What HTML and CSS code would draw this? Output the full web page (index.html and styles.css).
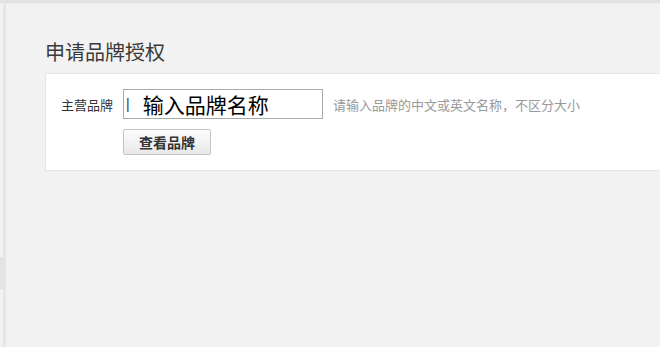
FILE: index.html
```html
<!DOCTYPE html>
<html lang="zh-CN">
<head>
  <meta charset="UTF-8">
  <title>申请品牌授权</title>
  <link rel="stylesheet" href="styles.css">
</head>
<body>
  <div class="topbar"></div>
  <div class="page">
    <div class="edge"><div class="edge-tab"></div></div>
    <div class="main">
      <h2 class="title">申请品牌授权</h2>
      <div class="card">
        <div class="row">
          <span class="label">主营品牌</span>
          <div class="input">
            <span class="caret">|</span>
            <span class="value">输入品牌名称</span>
          </div>
          <span class="hint">请输入品牌的中文或英文名称，不区分大小</span>
        </div>
        <div class="row actions">
          <button class="btn">查看品牌</button>
        </div>
      </div>
    </div>
  </div>
</body>
</html>
```

FILE: styles.css
```css
body {
  margin: 0;
  background: #f2f2f2;
  font-family: "Noto Sans CJK SC", "Liberation Sans", sans-serif;
  color: #333;
  overflow: hidden;
}

.topbar {
  height: 3px;
  background: #e3e3e3;
  border-bottom: 1px solid #ececec;
}

.page {
  display: flex;
  height: 343px;
}

.edge {
  position: relative;
  width: 3px;
  margin-left: 3px;
  background: #e6e6e6;
}

.edge-tab {
  position: absolute;
  left: -3px;
  top: 253px;
  width: 4px;
  height: 32px;
  background: #e4e4e4;
}

.main {
  flex: 1;
  padding-left: 39px;
  padding-top: 34px;
}

.title {
  margin: 0 0 8px;
  font-size: 20px;
  font-weight: normal;
  line-height: 27px;
  color: #3a3a3a;
}

.card {
  background: #fff;
  border: 1px solid #e6e6e6;
  border-right: none;
  height: 98px;
  padding: 15px 0 0 15px;
  box-sizing: border-box;
}

.row {
  display: flex;
  align-items: center;
}

.label {
  width: 62px;
  font-size: 13px;
  color: #333;
}

.input {
  width: 198px;
  height: 28px;
  border: 1px solid #a9a9a9;
  display: flex;
  align-items: center;
}

.caret {
  font-size: 14px;
  margin-left: 2px;
  color: #333;
  font-family: "Liberation Sans", sans-serif;
}

.value {
  margin-left: 13px;
  font-size: 21px;
  color: #000;
  line-height: 28px;
}

.hint {
  margin-left: 10px;
  font-size: 13px;
  color: #999;
}

.actions {
  margin-top: 10px;
  padding-left: 62px;
}

.btn {
  width: 88px;
  height: 26px;
  border: 1px solid #c4c4c4;
  border-radius: 2px;
  background: linear-gradient(#fdfdfd, #e8e8e8);
  font-family: inherit;
  font-size: 14px;
  font-weight: bold;
  color: #333;
  padding: 0;
}
```
